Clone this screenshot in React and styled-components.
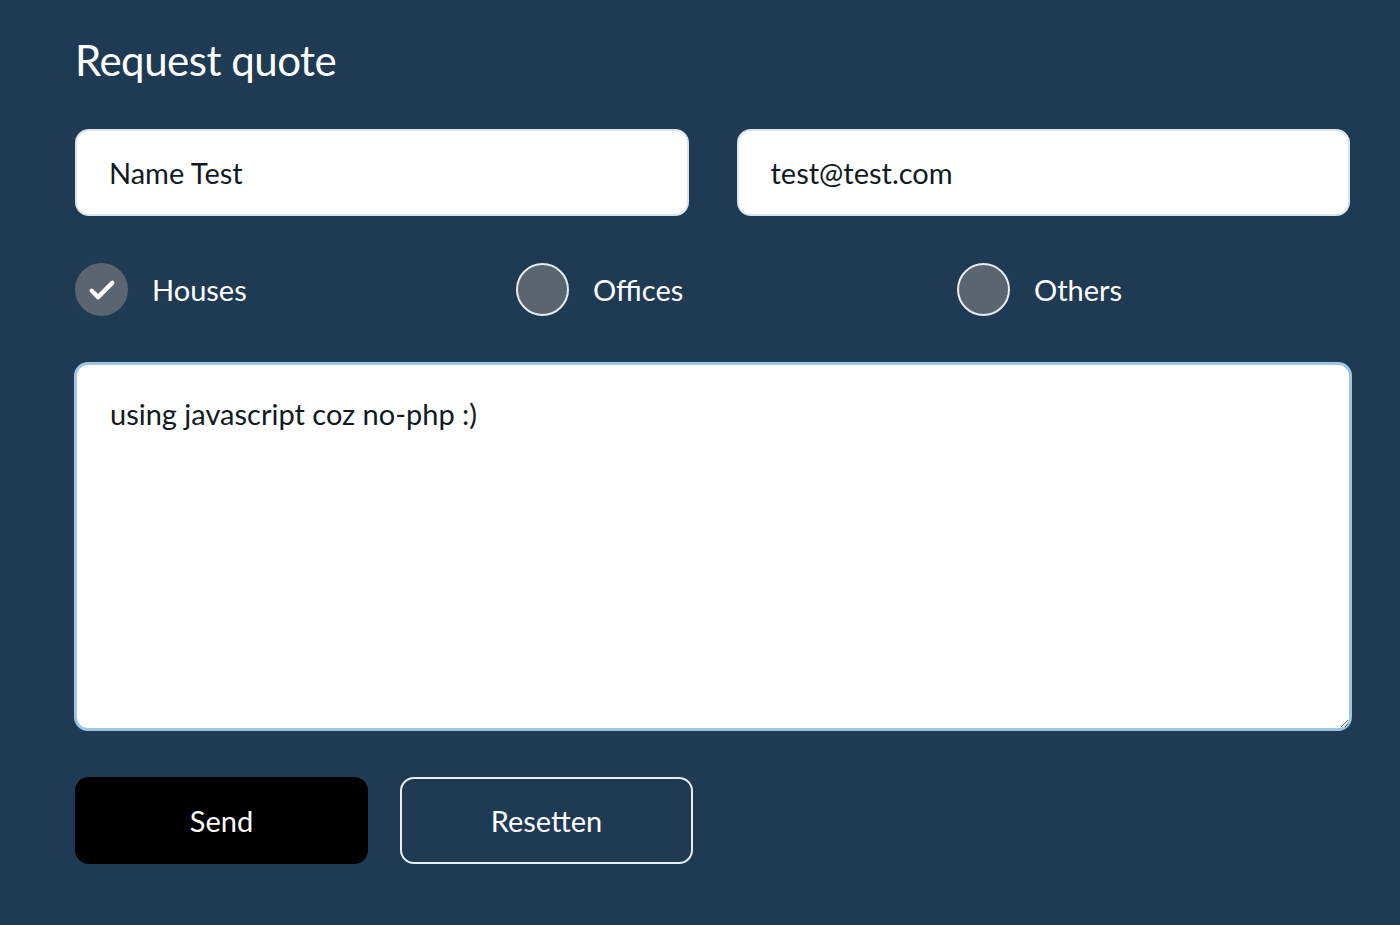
import React from 'react';
import styled, { createGlobalStyle } from 'styled-components';

const GlobalStyle = createGlobalStyle`
  html, body {
    margin: 0;
    padding: 0;
    background: #1f3b54;
    font-family: Lato, "Open Sans", sans-serif;
  }
`;

const Page = styled.div`
  min-height: 925px;
  box-sizing: border-box;
  padding: 34px 50px 0 75px;
  color: #fff;
`;

const Title = styled.h1`
  margin: 0 0 43px;
  font-size: 42px;
  font-weight: 400;
  line-height: 52px;
  letter-spacing: -0.5px;
`;

const FieldRow = styled.div`
  display: grid;
  grid-template-columns: 1fr 1fr;
  gap: 48px;
`;

const TextInput = styled.input`
  box-sizing: border-box;
  height: 87px;
  width: 100%;
  padding: 0 32px;
  border: 2px solid #dbe4ec;
  border-radius: 14px;
  background: #fff;
  font-family: inherit;
  font-size: 29px;
  color: #111a22;
  outline: none;
`;

const RadioRow = styled.div`
  display: grid;
  grid-template-columns: repeat(3, 441px);
  margin: 47px 0 46px;
`;

const RadioOption = styled.label`
  display: flex;
  align-items: center;
  gap: 24px;
  font-size: 29px;
  cursor: pointer;
`;

const Circle = styled.span`
  box-sizing: border-box;
  width: 53px;
  height: 53px;
  border-radius: 50%;
  background: #5a6570;
  border: ${({ checked }) => (checked ? 'none' : '2px solid #e6edf3')};
  display: flex;
  align-items: center;
  justify-content: center;
`;

const MessageBox = styled.textarea`
  display: block;
  box-sizing: border-box;
  width: calc(100% + 3px);
  margin-left: -1px;
  height: 369px;
  padding: 31px 33px;
  border: 3px solid #9dc6e6;
  border-radius: 14px;
  background: #fff;
  font-family: inherit;
  font-size: 29px;
  line-height: 36px;
  color: #111a22;
  caret-color: #111a22;
  outline: none;
  resize: both;
`;

const ButtonRow = styled.div`
  display: flex;
  gap: 32px;
  margin-top: 46px;
`;

const Button = styled.button`
  box-sizing: border-box;
  width: 293px;
  height: 87px;
  border-radius: 14px;
  font-family: inherit;
  font-size: 29px;
  color: #fff;
  cursor: pointer;
  background: ${({ variant }) => (variant === 'outline' ? 'transparent' : '#000')};
  border: ${({ variant }) => (variant === 'outline' ? '2px solid #e8eef3' : 'none')};
`;

const Check = () => (
  <svg width="38" height="38" viewBox="0 0 24 24" fill="none" stroke="#fff" strokeWidth="2.7" strokeLinecap="round" strokeLinejoin="round">
    <path d="M5.5 12.5l4 4L18.5 7.5" />
  </svg>
);

const options = [
  { label: 'Houses', checked: true },
  { label: 'Offices', checked: false },
  { label: 'Others', checked: false },
];

const moveCaretToEnd = (e) => {
  const len = e.target.value.length;
  e.target.setSelectionRange(len, len);
};

export default function App() {
  return (
    <>
      <GlobalStyle />
      <Page>
        <Title>Request quote</Title>
        <FieldRow>
          <TextInput defaultValue="Name Test" />
          <TextInput defaultValue="test@test.com" />
        </FieldRow>
        <RadioRow>
          {options.map((o) => (
            <RadioOption key={o.label}>
              <Circle checked={o.checked}>{o.checked && <Check />}</Circle>
              {o.label}
            </RadioOption>
          ))}
        </RadioRow>
        <MessageBox autoFocus onFocus={moveCaretToEnd} defaultValue="using javascript coz no-php :)" />
        <ButtonRow>
          <Button>Send</Button>
          <Button variant="outline">Resetten</Button>
        </ButtonRow>
      </Page>
    </>
  );
}
